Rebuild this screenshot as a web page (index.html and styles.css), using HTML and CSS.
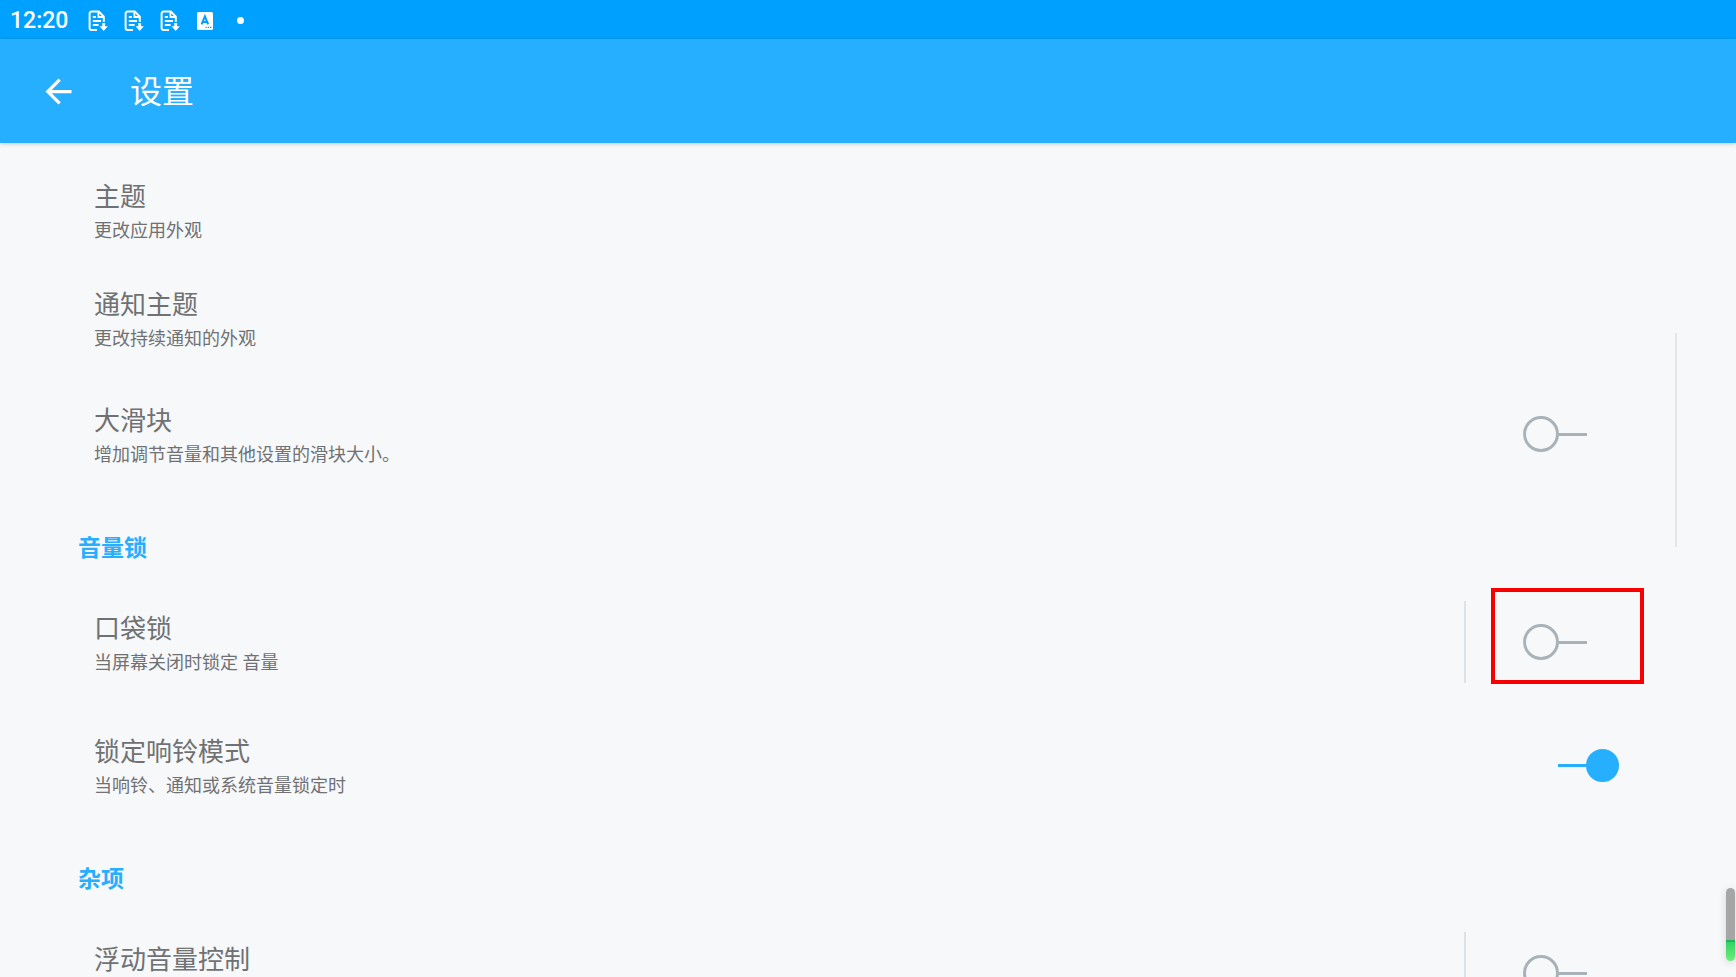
FILE: index.html
```html
<!DOCTYPE html>
<html lang="zh-CN">
<head>
<meta charset="utf-8">
<meta name="viewport" content="width=device-width, initial-scale=1">
<title>设置</title>
<link rel="stylesheet" href="styles.css">
</head>
<body>
<svg class="defs" aria-hidden="true">
  <symbol id="doc" viewBox="0 0 20 22">
    <path d="M9 20H3.6a2 2 0 0 1-2-2V3.6a2 2 0 0 1 2-2h7.2l5 5v5.4" fill="none" stroke="currentColor" stroke-width="2"/>
    <path d="M10.4 2v5h5.2" fill="none" stroke="currentColor" stroke-width="1.8"/>
    <path d="M4.8 7h3M4.8 11h8.2M4.8 15h5.8" fill="none" stroke="currentColor" stroke-width="2"/>
    <path d="M14.3 13h2.8v3.2h2.7l-4.1 4.8-4.1-4.8h2.7z" fill="currentColor"/>
  </symbol>
</svg>
<div class="screen">
  <div class="status">
    <time class="clock">12:20</time>
    <div class="tray">
      <svg class="doc"><use href="#doc"/></svg>
      <svg class="doc"><use href="#doc"/></svg>
      <svg class="doc"><use href="#doc"/></svg>
      <svg class="badge" viewBox="0 0 16 18">
        <rect width="16" height="18" rx="1.5" fill="#fff"/>
        <path d="M4.6 12.4 7.9 4.4 11.2 12.4M5.8 10h4.3" fill="none" stroke="#00a0ff" stroke-width="2"/>
        <path d="M8.6 15.4h1.2M10.8 15.4H12M13 15.4h1.4" stroke="#00a0ff" stroke-width="1.2"/>
      </svg>
      <span class="dot"></span>
    </div>
  </div>
  <header class="appbar">
    <button class="back" type="button" aria-label="返回">
      <svg viewBox="0 0 24 24"><path d="M20 11H7.83l5.59-5.59L12 4l-8 8 8 8 1.41-1.41L7.83 13H20z" fill="currentColor"/></svg>
    </button>
    <h1>设置</h1>
  </header>
  <main class="list">
    <div class="row">
      <div class="text"><div class="title">主题</div><div class="summary">更改应用外观</div></div>
    </div>
    <div class="row">
      <div class="text"><div class="title">通知主题</div><div class="summary">更改持续通知的外观</div></div>
    </div>
    <div class="row tall">
      <label class="text" for="big"><span class="title">大滑块</span><span class="summary">增加调节音量和其他设置的滑块大小。</span></label>
      <div class="control"><input class="switch" id="big" type="checkbox" role="switch"></div>
    </div>
    <h2>音量锁</h2>
    <div class="row tall">
      <label class="text" for="pocket"><span class="title">口袋锁</span><span class="summary">当屏幕关闭时锁定 音量</span></label>
      <div class="control split"><input class="switch" id="pocket" type="checkbox" role="switch"><span class="mark"></span></div>
    </div>
    <div class="row tall">
      <label class="text" for="ring"><span class="title">锁定响铃模式</span><span class="summary">当响铃、通知或系统音量锁定时</span></label>
      <div class="control"><input class="switch" id="ring" type="checkbox" role="switch" checked></div>
    </div>
    <h2>杂项</h2>
    <div class="row tall">
      <label class="text" for="float"><span class="title">浮动音量控制</span></label>
      <div class="control split"><input class="switch" id="float" type="checkbox" role="switch"></div>
    </div>
    <span class="rail"></span>
  </main>
  <span class="gauge"></span>
</div>
</body>
</html>
```

FILE: styles.css
```css
*, *::before, *::after { box-sizing: border-box; }
body {
  margin: 0;
  background: #f7f8fa;
  color: #6f7173;
  font-family: Roboto, "Noto Sans CJK SC", sans-serif;
}
.defs { position: absolute; width: 0; height: 0; }
.screen {
  position: relative;
  display: flex;
  flex-direction: column;
  height: 100vh;
  overflow: hidden;
}
.status {
  display: flex;
  align-items: center;
  flex: none;
  gap: 20px;
  height: 39px;
  padding: 2px 10px 0;
  background: #00a0ff;
  color: #fff;
}
.clock { font-size: 23px; font-weight: 500; line-height: 37px; }
.tray { display: flex; align-items: center; gap: 16px; }
.doc { width: 20px; height: 22px; }
.badge { width: 16px; height: 18px; margin-left: 1px; }
.dot { width: 7px; height: 7px; margin-left: 8px; border-radius: 50%; background: #fff; }
.appbar {
  position: relative;
  z-index: 1;
  display: flex;
  align-items: center;
  flex: none;
  gap: 52px;
  height: 104px;
  padding: 0 39px;
  background: #26aeff;
  color: #fff;
  box-shadow: 0 1px 4px rgba(0, 0, 0, 0.2);
}
.back { padding: 0; border: 0; background: none; color: inherit; }
.back svg { display: block; width: 39px; height: 39px; }
h1 { margin: 0; padding-top: 2px; font-size: 32px; font-weight: 400; line-height: 40px; }
.list { position: relative; flex: 1; min-height: 0; padding-top: 15px; overflow: hidden; }
.row {
  display: flex;
  align-items: center;
  justify-content: space-between;
  min-height: 108px;
  padding: 0 117px 0 94px;
}
.row.tall { min-height: 123px; }
.text { flex: 1; min-height: 66px; }
.title { display: block; font-size: 26px; line-height: 37px; }
.summary { display: block; font-size: 18px; line-height: 29px; }
h2 {
  margin: 0;
  padding: 37px 78px 18px;
  color: #26aeff;
  font-size: 23px;
  font-weight: 700;
  line-height: 30px;
}
.control {
  position: relative;
  display: flex;
  align-items: center;
  height: 82px;
  margin-bottom: 3px;
  padding-left: 57px;
}
.split { border-left: 2px solid #dde2e6; }
.switch {
  appearance: none;
  display: flex;
  align-items: center;
  width: 96px;
  height: 36px;
  margin: 0;
  color: #a8b3b9;
}
.switch::before {
  content: "";
  width: 36px;
  height: 36px;
  border: 3px solid currentColor;
  border-radius: 50%;
}
.switch::after { content: ""; width: 28px; height: 3px; background: currentColor; }
.switch:checked { flex-direction: row-reverse; color: #26aeff; }
.switch:checked::before { width: 33px; height: 33px; background: currentColor; }
.mark {
  position: absolute;
  top: -13px;
  right: -25px;
  width: 153px;
  height: 96px;
  border: 4px solid #f80000;
  pointer-events: none;
}
.rail { position: absolute; top: 190px; right: 59px; width: 2px; height: 214px; background: #e4e7ea; }
.gauge {
  position: absolute;
  right: 1px;
  bottom: 16px;
  width: 9px;
  height: 73px;
  border-radius: 5px;
  background: linear-gradient(#a6a6a6 52px, #1fb35a 52px 54px, #35d364 54px, #6bee7c);
  box-shadow: 0 2px 8px rgba(0, 0, 0, 0.15);
}
```
